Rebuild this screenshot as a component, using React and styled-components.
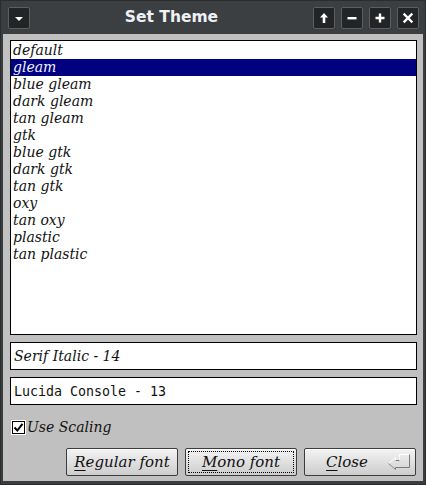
import React from 'react';
import styled, { createGlobalStyle } from 'styled-components';

const GlobalStyle = createGlobalStyle`
  html, body {
    margin: 0;
    padding: 0;
    background: #3a3d3f;
  }
`;

const themes = [
  'default',
  'gleam',
  'blue gleam',
  'dark gleam',
  'tan gleam',
  'gtk',
  'blue gtk',
  'dark gtk',
  'tan gtk',
  'oxy',
  'tan oxy',
  'plastic',
  'tan plastic',
];

const icons = {
  down: <path d="M4 7h8l-4 4z" fill="#fff" />,
  up: <path d="M8 3l4 4.5H9.3V13H6.7V7.5H4z" fill="#fff" />,
  min: <rect x="3.5" y="7" width="9" height="2.4" fill="#fff" />,
  max: <path d="M6.8 3.5h2.4v3.3h3.3v2.4H9.2v3.3H6.8V9.2H3.5V6.8h3.3z" fill="#fff" />,
  close: (
    <path d="M4.5 4.5l7 7M11.5 4.5l-7 7" stroke="#fff" strokeWidth="2.4" strokeLinecap="square" />
  ),
};

const TitleButton = ({ kind }) => (
  <TitleBtn>
    <svg width="16" height="16" viewBox="0 0 16 16">
      {icons[kind]}
    </svg>
  </TitleBtn>
);

const App = () => (
  <Window>
    <GlobalStyle />
    <TitleBar>
      <TitleButton kind="down" />
      <Title>Set Theme</Title>
      <TitleGroup>
        <TitleButton kind="up" />
        <TitleButton kind="min" />
        <TitleButton kind="max" />
        <TitleButton kind="close" />
      </TitleGroup>
    </TitleBar>
    <Body>
      <List>
        {themes.map((t) => (
          <Item key={t} selected={t === 'gleam'}>
            {t}
          </Item>
        ))}
      </List>
      <Field>Serif Italic - 14</Field>
      <Field mono>Lucida Console - 13</Field>
      <CheckRow>
        <Box>
          <svg width="11" height="11" viewBox="0 0 11 11">
            <path d="M1.5 5.5l2.8 3L9.5 1.8" stroke="#000" strokeWidth="2" fill="none" />
          </svg>
        </Box>
        Use Scaling
      </CheckRow>
      <Buttons>
        <Button>
          <u>R</u>egular font
        </Button>
        <Button focused>
          <Focus>
            <u>M</u>ono font
          </Focus>
        </Button>
        <Button>
          <CloseLabel>
            <u>C</u>lose
          </CloseLabel>
          <ReturnIcon width="24" height="18" viewBox="0 0 24 18">
            <path
              d="M22.5 1.5h-10v6h-4v-3l-7 6 7 6v-2h14z"
              fill="none"
              stroke="#ffffff"
              strokeWidth="1"
            />
            <path d="M22.5 1.5v13h-14M12.5 7.5h-4M8.5 14.5v2l-7-6" fill="none" stroke="#7a7a7a" strokeWidth="1" />
          </ReturnIcon>
        </Button>
      </Buttons>
    </Body>
  </Window>
);

const Window = styled.div`
  width: 426px;
  height: 485px;
  box-sizing: border-box;
  background: #3a3d3f;
  border: 1px solid #2a2c2d;
  display: flex;
  flex-direction: column;
  padding: 0 2px 3px 2px;
`;

const TitleBar = styled.div`
  height: 33px;
  display: flex;
  align-items: center;
  padding: 0 4px 0 5px;
  background: #3c3f41;
`;

const TitleBtn = styled.div`
  width: 20px;
  height: 20px;
  border: 1px solid #5c5f60;
  border-radius: 2px;
  background: #222425;
  display: flex;
  align-items: center;
  justify-content: center;
`;

const Title = styled.div`
  flex: 1;
  text-align: center;
  font-family: 'DejaVu Sans', sans-serif;
  font-weight: bold;
  font-size: 15.5px;
  color: #eef2f6;
  margin-top: -1px;
`;

const TitleGroup = styled.div`
  display: flex;
  gap: 6px;
`;

const Body = styled.div`
  flex: 1;
  background: #c0c0c0;
  padding: 6px 6px 0 7px;
  display: flex;
  flex-direction: column;
  font-family: 'DejaVu Serif', serif;
  font-style: italic;
  font-size: 14px;
  color: #111;
`;

const List = styled.div`
  height: 295px;
  box-sizing: border-box;
  border: 1px solid #000;
  background: #fff;
  padding-top: 1px;
`;

const Item = styled.div`
  height: 17px;
  line-height: 17px;
  padding-left: 2px;
  background: ${({ selected }) => (selected ? '#000080' : 'transparent')};
  color: ${({ selected }) => (selected ? '#f2f2ff' : '#111')};
`;

const Field = styled.div`
  margin-top: 7px;
  height: 28px;
  box-sizing: border-box;
  border: 1px solid #000;
  background: #fff;
  display: flex;
  align-items: center;
  padding-left: 3px;
  font-family: ${({ mono }) => (mono ? "'DejaVu Sans Mono', monospace" : "'DejaVu Serif', serif")};
  font-style: ${({ mono }) => (mono ? 'normal' : 'italic')};
  font-size: ${({ mono }) => (mono ? '13.3px' : '14px')};
`;

const CheckRow = styled.div`
  margin-top: 14px;
  display: flex;
  align-items: center;
  gap: 2px;
  padding-left: 2px;
  height: 16px;
  font-size: 14px;
`;

const Box = styled.div`
  width: 11px;
  height: 11px;
  border: 1px solid #000;
  box-shadow: 0 0 0 1px #fff;
  background: #fff;
  display: flex;
  align-items: center;
  justify-content: center;
`;

const Buttons = styled.div`
  margin-top: 13px;
  display: flex;
  justify-content: flex-end;
  gap: 7px;
  padding-right: 1px;
`;

const Button = styled.div`
  width: 112px;
  height: 28px;
  box-sizing: border-box;
  border: 1px solid #3c3c3c;
  border-radius: 2px;
  background: linear-gradient(#f4f4f4, #e2e2e2 45%, #cdcdcd);
  box-shadow: inset 0 1px 0 #fff;
  display: flex;
  align-items: center;
  justify-content: center;
  position: relative;
  font-size: 15px;
  color: #111;
  u {
    text-decoration-thickness: 1px;
    text-underline-offset: 3px;
  }
`;

const Focus = styled.div`
  position: absolute;
  inset: 2px;
  border: 1px dotted #000;
  display: flex;
  align-items: center;
  justify-content: center;
`;

const CloseLabel = styled.span`
  margin-right: 26px;
`;

const ReturnIcon = styled.svg`
  position: absolute;
  right: 4px;
  top: 4px;
`;

export default App;
